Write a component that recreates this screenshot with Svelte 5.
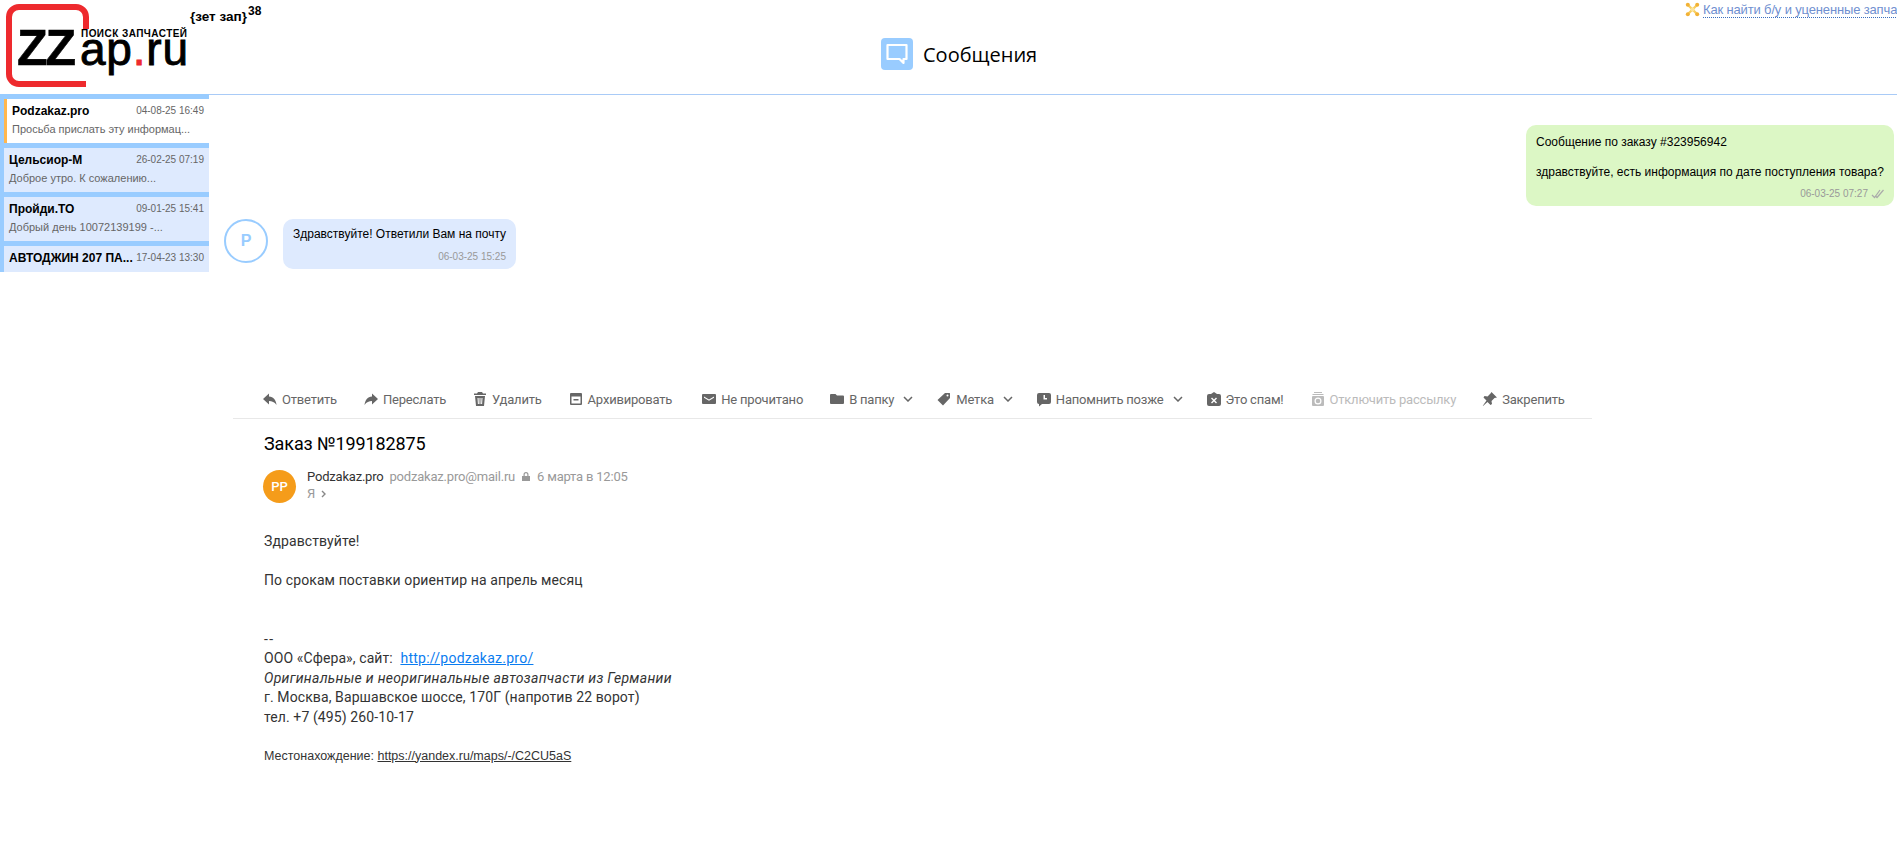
<script lang="ts">
    const chats = [
        { name: "Podzakaz.pro", time: "04-08-25 16:49", text: "Просьба прислать эту информац...", active: true },
        { name: "Цельсиор-М", time: "26-02-25 07:19", text: "Доброе утро. К сожалению..." },
        { name: "Пройди.ТО", time: "09-01-25 15:41", text: "Добрый день 10072139199 -..." },
        { name: "АВТОДЖИН 207 ПА...", time: "17-04-23 13:30" },
    ];

    const actions = [
        { label: "Ответить", d: "M7 2.500 1 8l6 5.500v-3.500c3 0 5.500 1 7.500 4C14 9 11.500 6 7 5.500z" },
        { label: "Переслать", d: "M9 2.500 15 8l-6 5.500v-3.500c-3 0-5.500 1-7.500 4C2 9 4.500 6 9 5.500z" },
        { label: "Удалить", d: "M6 1h4l1 1.500h3V4H2V2.500h3zM3 5h10l-1 10H4zM5.500 7l.4 6h1L6.600 7zm2 0v6h1V7zm2 0-.4 6h1l.4-6z" },
        { label: "Архивировать", d: "M3 2h10a1 1 0 0 1 1 1v10a1 1 0 0 1-1 1H3a1 1 0 0 1-1-1V3a1 1 0 0 1 1-1zm.5 3.500v7h9v-7zM5.500 8h5v1.500h-5z" },
        { label: "Не прочитано", d: "M2 3h12a1 1 0 0 1 1 1v8a1 1 0 0 1-1 1H2a1 1 0 0 1-1-1V4a1 1 0 0 1 1-1zm1 2.500v1.300l5 3 5-3V5.500l-5 3z" },
        { label: "В папку", d: "M2 3h4.500L8 4.500h6a1 1 0 0 1 1 1V12a1 1 0 0 1-1 1H2a1 1 0 0 1-1-1V4a1 1 0 0 1 1-1z", chevron: true },
        { label: "Метка", d: "M9 2h4.500A.5.5 0 0 1 14 2.500V7l-7 7.500L1.500 9zm2.500 1.500a1 1 0 1 0 0 2 1 1 0 0 0 0-2z", chevron: true },
        { label: "Напомнить позже", d: "M3 2h10a2 2 0 0 1 2 2v7a2 2 0 0 1-2 2H6l-3 2.500V13a2 2 0 0 1-2-2V4a2 2 0 0 1 2-2zm4.500 2v4.500H11V7H9V4z", chevron: true },
        { label: "Это спам!", d: "M8 1l3 2h2a2 2 0 0 1 2 2v8a2 2 0 0 1-2 2H3a2 2 0 0 1-2-2V5a2 2 0 0 1 2-2h2zM6 6.500 5 7.500 7 9.500l-2 2 1 1 2-2 2 2 1-1-2-2 2-2-1-1-2 2z" },
        { label: "Отключить рассылку", d: "M4 1h8v1H4zM2.500 3h11v1h-11zM3 5h10a1 1 0 0 1 1 1v8a1 1 0 0 1-1 1H3a1 1 0 0 1-1-1V6a1 1 0 0 1 1-1zm5 1.500a3.500 3.500 0 1 0 0 7 3.500 3.500 0 0 0 0-7zm0 1.200a2.300 2.300 0 1 1 0 4.600 2.300 2.300 0 0 1 0-4.600z", muted: true },
        { label: "Закрепить", d: "M9.500 1l5.500 5.500-2.500.5-3 3 .5 3-1.500 1-3-3L1 15l-.2-.3L4.500 9.500l-3-3 1-1.500 3 .5 3-3z" },
    ];
</script>

<div class="page">
    <header class="top">
        <div class="logo-box">
            <svg class="logo" width="300" height="94" viewBox="0 0 300 94">
                <path d="M86 29V17a10 10 0 0 0-10-10H19A10 10 0 0 0 9 17v57a10 10 0 0 0 10 10h67" fill="none" stroke="#ee2a2e" stroke-width="6" />
                <text class="zz" x="17" y="65" textLength="59">ZZ</text>
                <text class="ap" x="80" y="65" textLength="108">ap<tspan fill="#ee2a2e" stroke="#ee2a2e">.</tspan>ru</text>
                <text class="find" x="81" y="37" textLength="106">ПОИСК ЗАПЧАСТЕЙ</text>
                <text class="zet" x="190" y="21">&#123;зет зап&#125;</text>
                <text class="zet-n" x="248" y="15">38</text>
            </svg>
        </div>
        <div class="title">
            <span class="title-icon">
                <svg width="24" height="24" viewBox="0 0 24 24">
                    <path d="M2.500 3h19v14h-3v4l-4-4h-12z" fill="#99ccff" stroke="#fff" stroke-width="2.200" stroke-linejoin="round" />
                </svg>
            </span>
            <span>Сообщения</span>
        </div>
        <div class="hint">
            <svg width="15" height="15" viewBox="0 0 15 15">
                <path d="M3 3 12 12M12 3 3 12" stroke="#f8cf62" stroke-width="2.400" />
                <g fill="#f2b236">
                    <circle cx="2.800" cy="2.800" r="2" />
                    <circle cx="12.200" cy="2.800" r="2" />
                    <circle cx="2.800" cy="12.200" r="2" />
                    <circle cx="12.200" cy="12.200" r="2" />
                </g>
                <circle cx="7.500" cy="7.500" r="2" fill="#fbe39a" />
            </svg>
            <a href="#hint">Как найти б/у и уцененные запчасти</a>
        </div>
    </header>

    <div class="content">
        <aside class="sidebar">
            {#each chats as chat}
                <div class="chat" class:active={chat.active}>
                    <div class="chat-head">
                        <b>{chat.name}</b>
                        <span>{chat.time}</span>
                    </div>
                    {#if chat.text}
                        <div class="chat-text">{chat.text}</div>
                    {/if}
                </div>
            {/each}
        </aside>

        <main class="main">
            <div class="bubble own">
                <div>Сообщение по заказу #323956942</div>
                <div class="spaced">здравствуйте, есть информация по дате поступления товара?</div>
                <div class="stamp">
                    06-03-25 07:27
                    <svg width="13" height="10" viewBox="0 0 13 10" fill="none" stroke="#aaa" stroke-width="1.200">
                        <path d="M1 6l2.500 2.500L9 1M5 7.500 6 8.500 12.500 1" />
                    </svg>
                </div>
            </div>

            <div class="incoming">
                <div class="avatar">P</div>
                <div class="bubble other">
                    <div>Здравствуйте! Ответили Вам на почту</div>
                    <div class="stamp">06-03-25 15:25</div>
                </div>
            </div>

            <section class="mail">
                <div class="toolbar">
                    {#each actions as a}
                        <span class="action" class:muted={a.muted}>
                            <svg width="16" height="16" viewBox="0 0 16 16"><path d={a.d} fill-rule="evenodd" /></svg>
                            {a.label}
                            {#if a.chevron}
                                <svg class="chev" width="10" height="6" viewBox="0 0 10 6"><path d="M1 1l4 4 4-4" /></svg>
                            {/if}
                        </span>
                    {/each}
                </div>

                <div class="mail-inner">
                    <h2>Заказ №199182875</h2>
                    <div class="sender">
                        <div class="sender-pic">PP</div>
                        <div>
                            <div class="sender-line">
                                <span class="sender-name">Podzakaz.pro</span>
                                <span class="grey">podzakaz.pro@mail.ru</span>
                                <svg width="10" height="11" viewBox="0 0 10 11">
                                    <path d="M2.500 5V3.500a2.500 2.500 0 0 1 5 0V5H9v5H1V5zM3.700 5h2.600V3.500a1.300 1.300 0 0 0-2.600 0z" fill="#999" fill-rule="evenodd" />
                                </svg>
                                <span class="grey">6 марта в 12:05</span>
                            </div>
                            <div class="to grey">
                                Я
                                <svg width="6" height="8" viewBox="0 0 6 8"><path d="M1 1l3 3-3 3" fill="none" stroke="#888" stroke-width="1.400" /></svg>
                            </div>
                        </div>
                    </div>

                    <div class="body">
                        <p>Здравствуйте!</p>
                        <p>По срокам поставки ориентир на апрель месяц</p>
                        <p class="sign">
                            <span class="dash">--</span><br />
                            ООО «Сфера», сайт: <a href="#site">http://podzakaz.pro/</a><br />
                            <i>Оригинальные и неоригинальные автозапчасти из Германии</i><br />
                            г. Москва, Варшавское шоссе, 170Г (напротив 22 ворот)<br />
                            тел. +7 (495) 260-10-17
                        </p>
                        <p class="place">Местонахождение: <a href="#map">https://yandex.ru/maps/-/C2CU5aS</a></p>
                    </div>
                </div>
            </section>
        </main>
    </div>
</div>

<style>
    :global(body) {
        margin: 0;
        background: #fff;
    }

    .page {
        height: 852px;
        overflow: hidden;
        font-family: "Liberation Sans", Arial, sans-serif;
        color: #000;
    }

    .top {
        display: flex;
        height: 94px;
        border-bottom: 1px solid #a9cbf7;
    }

    .logo-box {
        flex: none;
        width: 881px;
    }

    .logo {
        display: block;
    }

    .zz {
        font: bold 50px "Liberation Sans", sans-serif;
        stroke: #000;
        stroke-width: 0.6px;
    }

    .ap {
        font: 46px "Liberation Sans", sans-serif;
        stroke: #000;
        stroke-width: 0.9px;
    }

    .find {
        font: bold 10px "Liberation Sans", sans-serif;
    }

    .zet {
        font: bold 13.500px "Liberation Sans", sans-serif;
    }

    .zet-n {
        font: bold 12px "Liberation Sans", sans-serif;
    }

    .title {
        flex: none;
        width: 804px;
        display: flex;
        align-items: center;
        gap: 10px;
        padding-top: 14px;
        box-sizing: border-box;
        font: 20px "Open Sans", sans-serif;
    }

    .title-icon {
        width: 32px;
        height: 32px;
        border-radius: 4px;
        background: #99ccff;
        display: flex;
        align-items: center;
        justify-content: center;
    }

    .hint {
        flex: none;
        display: flex;
        align-items: flex-start;
        gap: 3px;
        padding-top: 2px;
        font-size: 13px;
        letter-spacing: -0.15px;
        white-space: nowrap;
    }

    .hint a {
        color: #6f8fd0;
        text-decoration: none;
        border-bottom: 1px dotted #3a6fc0;
    }

    .content {
        display: flex;
        align-items: flex-start;
    }

    .sidebar {
        flex: none;
        width: 209px;
        height: 178px;
        margin-top: -1px;
        padding: 5px 0 0 4px;
        box-sizing: border-box;
        background: #99ccff;
        overflow: hidden;
    }

    .chat {
        height: 44px;
        margin-bottom: 5px;
        padding: 4px 5px 0 5px;
        box-sizing: border-box;
        background: #deeafe;
    }

    .chat.active {
        background: #fff;
        border-left: 3px solid #ffb74f;
    }

    .chat-head {
        display: flex;
        align-items: center;
        justify-content: space-between;
        height: 15px;
        font-size: 10px;
        color: #666;
        white-space: nowrap;
    }

    .chat-head b {
        font-size: 12px;
        color: #000;
    }

    .chat-text {
        margin-top: 4px;
        font-size: 11px;
        line-height: 14px;
        color: #666;
        white-space: nowrap;
    }

    .main {
        flex: 1;
        min-width: 0;
        padding-top: 30px;
    }

    .bubble {
        box-sizing: border-box;
        border-radius: 10px;
        font-size: 12px;
        line-height: 15px;
        white-space: nowrap;
    }

    .own {
        width: 368px;
        height: 81px;
        margin: 0 3px 13px auto;
        padding: 10px;
        background: #dcf7c5;
    }

    .spaced {
        margin-top: 15px;
    }

    .stamp {
        display: flex;
        justify-content: flex-end;
        align-items: center;
        gap: 3px;
        margin-top: 8px;
        font-size: 10px;
        line-height: 12px;
        color: #999;
    }

    .incoming {
        display: flex;
        align-items: flex-start;
        gap: 15px;
        padding-left: 15px;
    }

    .avatar {
        width: 44px;
        height: 44px;
        box-sizing: border-box;
        border: 2px solid #99ccff;
        border-radius: 50%;
        display: flex;
        align-items: center;
        justify-content: center;
        font-size: 16px;
        font-weight: bold;
        color: #99ccff;
    }

    .other {
        width: 233px;
        height: 50px;
        padding: 8px 10px;
        background: #deeafe;
    }

    .other .stamp {
        margin-top: 9px;
    }

    .mail {
        width: 1359px;
        margin: 111px 0 0 24px;
        font-family: Roboto, sans-serif;
    }

    .toolbar {
        display: flex;
        align-items: center;
        gap: 26px;
        height: 38px;
        padding-left: 29px;
        border-bottom: 1px solid #e8e8e8;
        font-size: 13px;
        letter-spacing: -0.2px;
        color: #666;
        white-space: nowrap;
    }

    .action {
        display: flex;
        align-items: center;
        gap: 4px;
    }

    .action:nth-child(5) {
        margin-left: 3px;
    }

    .action svg {
        fill: #666;
    }

    .action .chev {
        margin: 0 -3px 0 5px;
        fill: none;
        stroke: #666;
        stroke-width: 1.500;
    }

    .action.muted {
        color: #bbb;
    }

    .action.muted svg {
        fill: #bbb;
    }

    .mail-inner {
        padding: 14px 0 0 30px;
    }

    h2 {
        margin: 0 0 0 1px;
        font-size: 18px;
        font-weight: 400;
        line-height: 22px;
        letter-spacing: -0.1px;
        color: #000;
    }

    .sender {
        display: flex;
        gap: 11px;
        margin-top: 15px;
    }

    .sender-pic {
        width: 33px;
        height: 33px;
        border-radius: 50%;
        background: #f59c1a;
        color: #fff;
        font-size: 13px;
        font-weight: 500;
        display: flex;
        align-items: center;
        justify-content: center;
    }

    .sender-line {
        display: flex;
        align-items: center;
        gap: 6px;
        height: 13px;
        font-size: 13px;
        letter-spacing: -0.2px;
    }

    .sender-name {
        color: #333;
    }

    .grey {
        color: #999;
    }

    .to {
        display: flex;
        align-items: center;
        gap: 6px;
        margin-top: 3px;
        font-size: 13px;
        line-height: 15px;
    }

    .body {
        margin: 29px 0 0 1px;
        font-size: 14px;
        line-height: 19.500px;
        letter-spacing: 0.1px;
        color: #333;
    }

    .body p {
        margin: 0 0 19.500px;
    }

    .body .sign {
        margin-top: 39px;
    }

    .dash {
        letter-spacing: 1.500px;
    }

    .body i {
        letter-spacing: 0.3px;
    }

    .body a {
        color: #0a7cf0;
        letter-spacing: 0.25px;
    }

    .sign a {
        margin-left: 4px;
    }

    .body .place {
        font-family: "Liberation Sans", sans-serif;
        font-size: 12.500px;
        letter-spacing: 0;
    }

    .body .place a {
        color: #333;
        letter-spacing: 0;
    }
</style>
